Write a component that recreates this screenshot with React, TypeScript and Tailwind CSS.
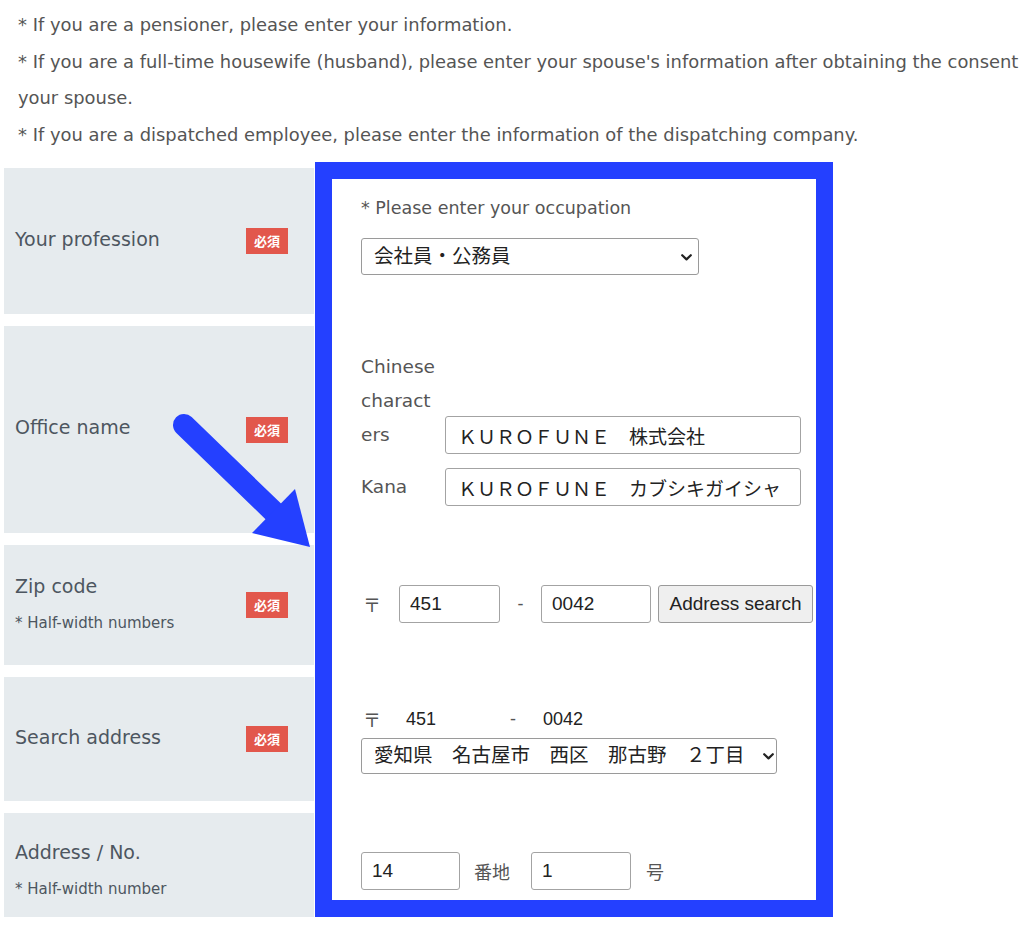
const sans = "font-['DejaVu_Sans','Noto_Sans_CJK_JP',sans-serif]";
const field = "font-['Liberation_Sans','Noto_Sans_CJK_JP',sans-serif]";
const inputStyle = `h-[38px] border border-[#a3a3a3] rounded-[3px] bg-white px-[10px] text-[19px] text-[#222] outline-none ${field}`;

function Badge() {
  return (
    <span className="flex w-[42px] h-[26px] items-center justify-center bg-[#e2574c] text-white text-[13px] font-bold font-['Noto_Sans_CJK_JP',sans-serif]">
      必須
    </span>
  );
}

function LabelRow({ h, label, sub, required, extra = "" }: { h: string; label: string; sub?: string; required?: boolean; extra?: string }) {
  return (
    <div className={`${h} ${extra} flex items-center bg-[#e6ebee] pl-[11px] pr-[26px]`}>
      <div className={`flex-1 ${sub ? "pb-[6px]" : "pb-[5px]"}`}>
        <div className="text-[19px] leading-[28px] text-[#4d5660]">{label}</div>
        {sub && <div className="mt-[13px] text-[15px] leading-[20px] text-[#4d5660]">{sub}</div>}
      </div>
      {required && <Badge />}
    </div>
  );
}

function Chevron({ className }: { className: string }) {
  return (
    <svg className={`absolute pointer-events-none ${className}`} width="11" height="7" viewBox="0 0 11 7">
      <path d="M1.2 1.2 L5.5 5.4 L9.8 1.2" fill="none" stroke="#222" strokeWidth="2.2" strokeLinecap="round" strokeLinejoin="round" />
    </svg>
  );
}

export default function App() {
  return (
    <div className={`relative w-[1024px] h-[933px] overflow-hidden bg-white ${sans}`}>
      <div className="w-[1058px] pl-[18px] pt-[7px] text-[17.9px] leading-[36.5px] text-[#555]">
        <p>* If you are a pensioner, please enter your information.</p>
        <p>* If you are a full-time housewife (husband), please enter your spouse's information after obtaining the consent of your spouse.</p>
        <p>* If you are a dispatched employee, please enter the information of the dispatching company.</p>
      </div>

      <div className="flex mt-[9px] pl-[4px]">
        <div className="w-[310px] pt-[6px] flex flex-col gap-[12px]">
          <LabelRow h="h-[146px]" label="Your profession" required />
          <LabelRow h="h-[207px]" label="Office name" required />
          <LabelRow h="h-[120px]" label="Zip code" sub="* Half-width numbers" required />
          <LabelRow h="h-[124px]" label="Search address" required />
          <LabelRow h="h-[104px]" extra="pt-[12px]" label="Address / No." sub="* Half-width number" />
        </div>

        <div className="w-[518px] h-[755px] ml-[1px] border-[17px] border-[#2440ff] bg-white pl-[29px] pt-[15px] text-[#555]">
          <p className="text-[17.5px] leading-[28px]">* Please enter your occupation</p>
          <div className="relative mt-[16px] w-[338px] h-[37px]">
            <select
              defaultValue="a"
              className={`appearance-none w-full h-full border border-[#9a9a9a] rounded-[3px] bg-white pl-[12px] text-[19.5px] text-[#222] ${field}`}
            >
              <option value="a">会社員・公務員</option>
            </select>
            <Chevron className="right-[7px] top-[16px]" />
          </div>

          <div className="mt-[75px] grid grid-cols-[78px_356px] gap-x-[6px] gap-y-[14px]">
            <div className="self-end pb-[2px] text-[18.5px] leading-[34px] break-words">Chinese characters</div>
            <input className={`${inputStyle} h-[37px] self-end px-[12px] text-[18px]`} defaultValue="ＫＵＲＯＦＵＮＥ　株式会社" />
            <div className="self-center text-[18.5px] leading-[34px]">Kana</div>
            <input className={`${inputStyle} px-[12px] text-[18px]`} defaultValue="ＫＵＲＯＦＵＮＥ　カブシキガイシャ" />
          </div>

          <div className="mt-[79px] flex items-center h-[38px]">
            <span className="w-[38px] pl-[2px] text-[18px] text-[#555] font-['Noto_Sans_CJK_JP',sans-serif]">〒</span>
            <input className={`${inputStyle} w-[101px]`} defaultValue="451" />
            <span className={`w-[41px] text-center text-[18px] ${field}`}>-</span>
            <input className={`${inputStyle} w-[110px]`} defaultValue="0042" />
            <button className={`ml-[7px] w-[155px] h-[38px] border border-[#9a9a9a] rounded-[3px] bg-[#efefef] text-[19px] text-[#222] ${field}`}>
              Address search
            </button>
          </div>

          <div className={`mt-[84px] flex h-[24px] items-center text-[18px] text-[#222] ${field}`}>
            <span className="w-[45px] pl-[2px] text-[#555] font-['Noto_Sans_CJK_JP',sans-serif]">〒</span>
            <span className="w-[104px]">451</span>
            <span className="w-[33px] text-[#555]">-</span>
            <span>0042</span>
          </div>
          <div className="relative mt-[7px] w-[416px] h-[36px]">
            <select
              defaultValue="a"
              className={`appearance-none w-full h-full border border-[#9a9a9a] rounded-[3px] bg-white pl-[12px] text-[19.5px] text-[#222] ${field}`}
            >
              <option value="a">愛知県　名古屋市　西区　那古野　２丁目</option>
            </select>
            <Chevron className="right-[3px] top-[15px]" />
          </div>

          <div className="mt-[78px] flex items-center h-[38px]">
            <input className={`${inputStyle} w-[99px] px-[9px]`} defaultValue="14" />
            <span className="ml-[14px] w-[36px] text-[18px] font-['Noto_Sans_CJK_JP',sans-serif]">番地</span>
            <input className={`${inputStyle} ml-[21px] w-[100px] px-[9px]`} defaultValue="1" />
            <span className="ml-[15px] text-[18px] font-['Noto_Sans_CJK_JP',sans-serif]">号</span>
          </div>
        </div>
      </div>

      <svg className="absolute left-0 top-0 pointer-events-none" width="1024" height="933" viewBox="0 0 1024 933">
        <line x1="184" y1="425" x2="277" y2="515" stroke="#2440ff" strokeWidth="22" strokeLinecap="round" />
        <polygon points="295,489 252,533 310,547" fill="#2440ff" />
      </svg>
    </div>
  );
}
